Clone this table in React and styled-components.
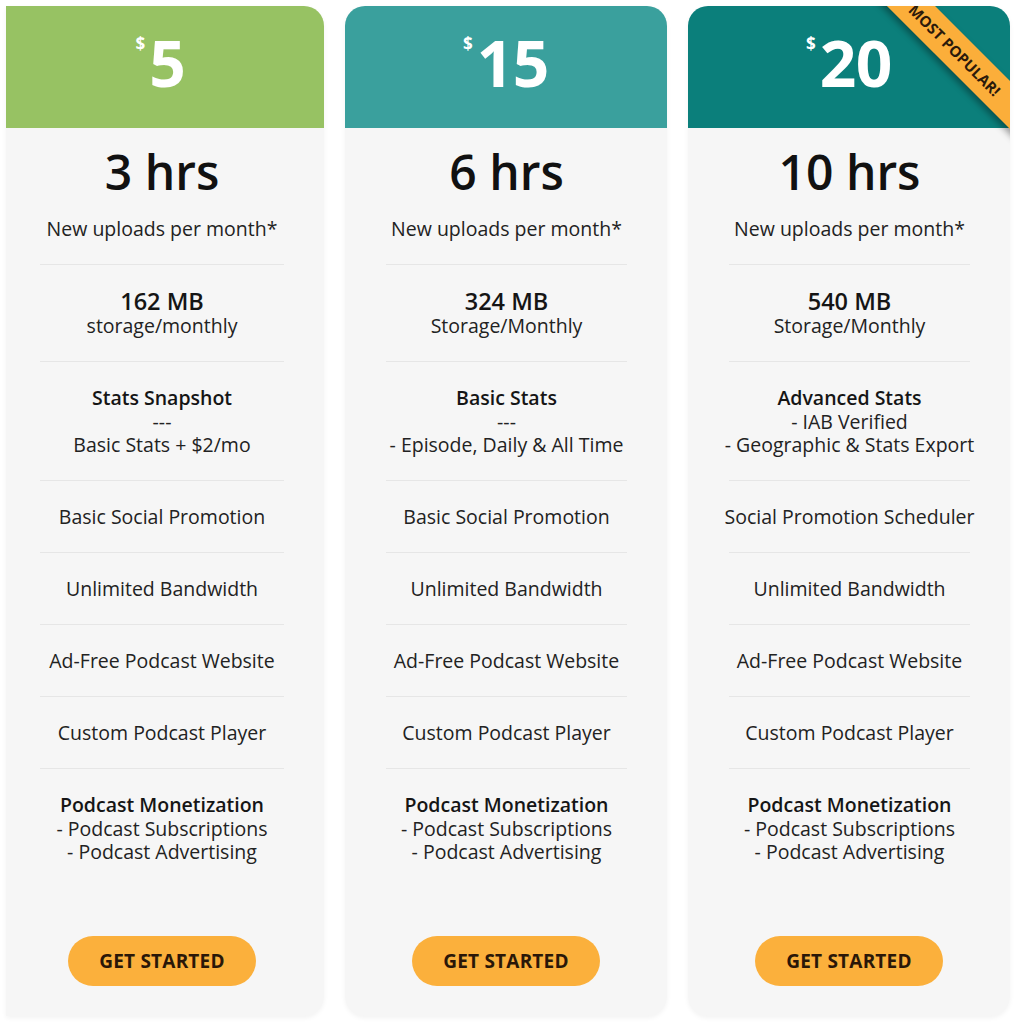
import React from "react";
import styled, { createGlobalStyle } from "styled-components";

const GlobalStyle = createGlobalStyle`
  body {
    margin: 0;
    background: #ffffff;
    font-family: "Open Sans", "Noto Sans", sans-serif;
    color: #1f1f1f;
  }
`;

const Page = styled.div`
  display: grid;
  grid-template-columns: 318px 322px 322px;
  column-gap: 21px;
  padding: 6px 8px 8px 6px;
  align-items: start;
`;

const Card = styled.div`
  position: relative;
  display: flex;
  flex-direction: column;
  background: #f6f6f6;
  border-radius: ${({ $edge }) => ($edge ? "0 20px 20px 0" : "20px")};
  overflow: hidden;
  box-shadow: 0 2px 5px rgba(0, 0, 0, 0.05);
`;

const Header = styled.div`
  height: 122px;
  background: ${({ $color }) => $color};
  display: flex;
  align-items: center;
  justify-content: center;
  padding-right: ${({ $edge }) => ($edge ? "9px" : "0")};
  color: #ffffff;
`;

const Price = styled.div`
  display: flex;
  align-items: flex-start;
  font-weight: 700;
  margin-top: -8px;
`;

const Dollar = styled.span`
  font-size: 17px;
  line-height: 1;
  margin-top: 4px;
  margin-right: 4px;
`;

const Amount = styled.span`
  font-size: 64px;
  line-height: 1;
  letter-spacing: -0.5px;
`;

const Body = styled.div`
  display: flex;
  flex-direction: column;
  padding: ${({ $edge }) => ($edge ? "0 40px 0 34px" : "0 40px 0 41px")};
`;

const Hours = styled.div`
  font-size: 48px;
  font-weight: 600;
  line-height: 56px;
  text-align: center;
  margin-top: 16px;
  color: #111111;
`;

const Row = styled.div`
  display: flex;
  flex-direction: column;
  align-items: center;
  white-space: nowrap;
  padding: ${({ $first }) => ($first ? "17px" : "24px")} 0 23.5px;
  font-size: 19.5px;
  line-height: 23.5px;
  color: #222222;
  border-bottom: ${({ $last }) => ($last ? "none" : "1px solid #e6e6e6")};
`;

const Strong = styled.div`
  font-weight: 600;
  font-size: ${({ $big }) => ($big ? "23.5px" : "19.5px")};
  line-height: ${({ $big }) => ($big ? "25px" : "23.5px")};
  color: #151515;
`;

const Line = styled.div``;

const Footer = styled.div`
  display: flex;
  justify-content: center;
  padding: 49px ${({ $edge }) => ($edge ? "6px" : "0")} 30px 0;
`;

const Button = styled.button`
  width: 188px;
  height: 50px;
  border: none;
  border-radius: 25px;
  background: #fbb03c;
  color: #2a1708;
  font-family: "Open Sans", sans-serif;
  font-weight: 700;
  font-size: 19px;
  letter-spacing: 0.2px;
  cursor: pointer;
`;

const Ribbon = styled.div`
  position: absolute;
  top: 27px;
  left: 157px;
  width: 220px;
  height: 34px;
  background: #fbae3a;
  transform: rotate(45deg);
  display: flex;
  align-items: center;
  justify-content: center;
  font-size: 15px;
  font-weight: 700;
  color: #2b1a0b;
  white-space: nowrap;
  box-shadow: -2px 4px 6px rgba(0, 0, 0, 0.35);
`;

const plans = [
  {
    price: "5",
    color: "#97c263",
    hours: "3 hrs",
    storage: "162 MB",
    storageLabel: "storage/monthly",
    stats: ["Stats Snapshot", "---", "Basic Stats + $2/mo"],
    social: "Basic Social Promotion",
    edge: true,
  },
  {
    price: "15",
    color: "#3aa09d",
    hours: "6 hrs",
    storage: "324 MB",
    storageLabel: "Storage/Monthly",
    stats: ["Basic Stats", "---", "- Episode, Daily & All Time"],
    social: "Basic Social Promotion",
  },
  {
    price: "20",
    color: "#0b7f7b",
    hours: "10 hrs",
    storage: "540 MB",
    storageLabel: "Storage/Monthly",
    stats: ["Advanced Stats", "- IAB Verified", "- Geographic & Stats Export"],
    social: "Social Promotion Scheduler",
    popular: true,
  },
];

function PlanCard({ plan }) {
  const [statsTitle, ...statsLines] = plan.stats;
  return (
    <Card $edge={plan.edge}>
      <Header $color={plan.color} $edge={plan.edge}>
        <Price>
          <Dollar>$</Dollar>
          <Amount>{plan.price}</Amount>
        </Price>
      </Header>
      {plan.popular && <Ribbon>MOST POPULAR!</Ribbon>}
      <Body $edge={plan.edge}>
        <Hours>{plan.hours}</Hours>
        <Row $first>New uploads per month*</Row>
        <Row>
          <Strong $big>{plan.storage}</Strong>
          <Line>{plan.storageLabel}</Line>
        </Row>
        <Row>
          <Strong>{statsTitle}</Strong>
          {statsLines.map((l) => (
            <Line key={l}>{l}</Line>
          ))}
        </Row>
        <Row>{plan.social}</Row>
        <Row>Unlimited Bandwidth</Row>
        <Row>Ad-Free Podcast Website</Row>
        <Row>Custom Podcast Player</Row>
        <Row $last>
          <Strong>Podcast Monetization</Strong>
          <Line>- Podcast Subscriptions</Line>
          <Line>- Podcast Advertising</Line>
        </Row>
      </Body>
      <Footer $edge={plan.edge}>
        <Button>GET STARTED</Button>
      </Footer>
    </Card>
  );
}

export default function App() {
  return (
    <>
      <GlobalStyle />
      <Page>
        {plans.map((p) => (
          <PlanCard key={p.price} plan={p} />
        ))}
      </Page>
    </>
  );
}
